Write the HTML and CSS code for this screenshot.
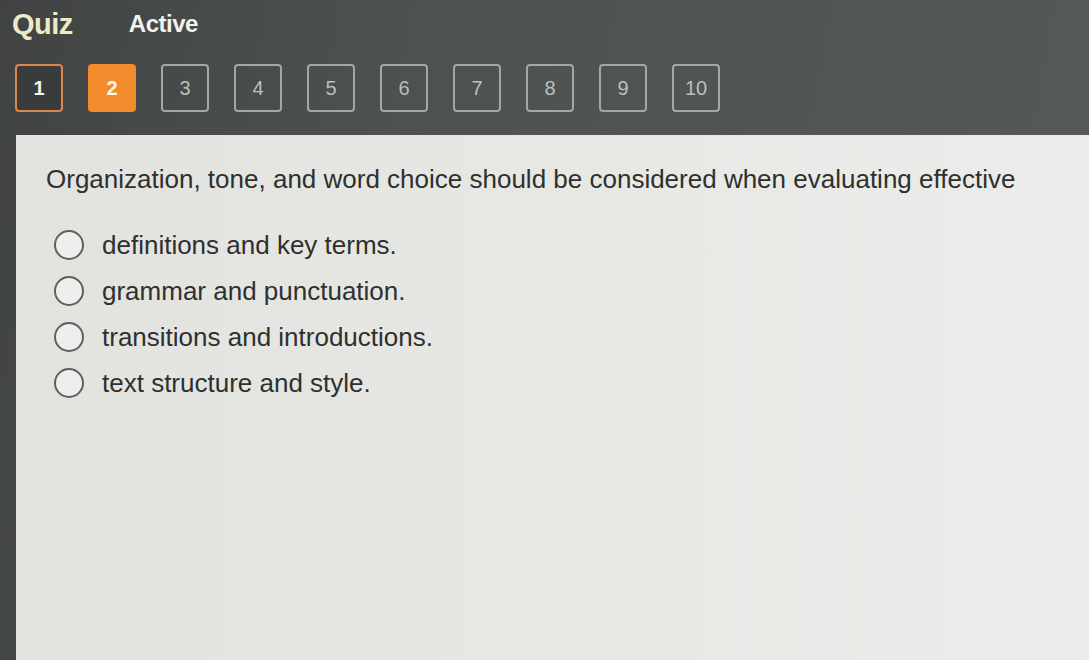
FILE: index.html
```html
<!DOCTYPE html>
<html>
<head>
<meta charset="utf-8">
<link rel="stylesheet" href="styles.css">
</head>
<body>
<div class="app">
  <header class="top">
    <div class="titles">
      <span class="quiz">Quiz</span>
      <span class="status">Active</span>
    </div>
    <nav class="nums">
      <span class="num visited">1</span>
      <span class="num current">2</span>
      <span class="num">3</span>
      <span class="num">4</span>
      <span class="num">5</span>
      <span class="num">6</span>
      <span class="num">7</span>
      <span class="num">8</span>
      <span class="num">9</span>
      <span class="num">10</span>
    </nav>
  </header>
  <main class="panel">
    <p class="question">Organization, tone, and word choice should be considered when evaluating effective</p>
    <ul class="options">
      <li class="option"><span class="radio"></span><span>definitions and key terms.</span></li>
      <li class="option"><span class="radio"></span><span>grammar and punctuation.</span></li>
      <li class="option"><span class="radio"></span><span>transitions and introductions.</span></li>
      <li class="option"><span class="radio"></span><span>text structure and style.</span></li>
    </ul>
  </main>
</div>
</body>
</html>
```
FILE: styles.css
```css
html, body {
  margin: 0;
  padding: 0;
  height: 100%;
}
body {
  font-family: "Liberation Sans", Arial, sans-serif;
  background: #4b504e;
  overflow: hidden;
}
.app {
  display: flex;
  flex-direction: column;
  height: 660px;
  background: linear-gradient(100deg, #404342 0%, #4d5250 35%, #555a58 100%);
}
.top {
  padding: 6px 0 0 12px;
  height: 121px;
  box-sizing: border-box;
}
.titles {
  display: flex;
  align-items: center;
  gap: 56px;
  height: 36px;
}
.quiz {
  font-weight: bold;
  font-size: 29px;
  color: #ecebc6;
  letter-spacing: -0.5px;
}
.status {
  font-weight: bold;
  font-size: 24px;
  color: #f2f2ee;
  letter-spacing: -0.5px;
}
.nums {
  display: flex;
  gap: 25px;
  margin-top: 22px;
  padding-left: 3px;
}
.num {
  width: 48px;
  height: 48px;
  box-sizing: border-box;
  border: 2px solid #a3a7a5;
  border-radius: 4px;
  display: flex;
  align-items: center;
  justify-content: center;
  color: #bcbfbd;
  font-size: 20px;
}
.num.visited {
  border-color: #d9874a;
  background: #3a3c3b;
  color: #f4f4f0;
  font-weight: bold;
}
.num.current {
  border-color: #f28c2c;
  background: #f28c2c;
  color: #fff6ea;
  font-weight: bold;
}
.panel {
  flex: 1;
  margin: 14px 0 0 16px;
  background: linear-gradient(90deg, #e2e3df 0%, #e8e9e5 60%, #ecedeb 100%);
  padding: 27px 0 0 30px;
}
.question {
  margin: 0;
  font-size: 26px;
  color: #2e302f;
  line-height: 34px;
}
.options {
  list-style: none;
  margin: 34px 0 0 8px;
  padding: 0;
  display: flex;
  flex-direction: column;
  gap: 16px;
}
.option {
  display: flex;
  align-items: center;
  gap: 18px;
  font-size: 26px;
  color: #2e302f;
  height: 30px;
}
.radio {
  width: 30px;
  height: 30px;
  box-sizing: border-box;
  border: 2px solid #5d605e;
  border-radius: 50%;
  background: #eeefec;
}
```
